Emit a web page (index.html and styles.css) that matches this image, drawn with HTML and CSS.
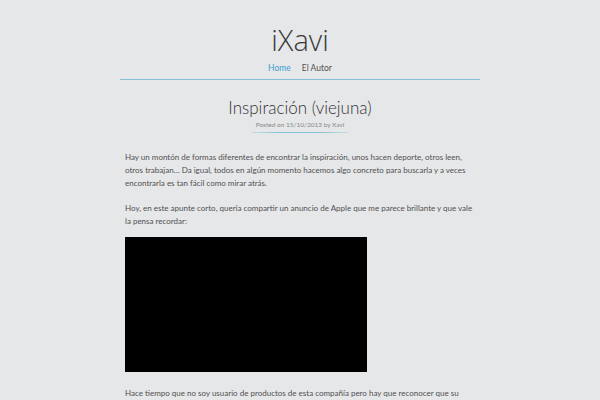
FILE: index.html
```html
<!DOCTYPE html>
<html lang="es">
<head>
<meta charset="utf-8">
<title>iXavi</title>
<link rel="stylesheet" href="styles.css">
</head>
<body>
<header class="site-header">
  <h1 class="site-title">iXavi</h1>
  <nav class="main-nav">
    <a class="nav-link current" href="#">Home</a>
    <a class="nav-link" href="#">El Autor</a>
  </nav>
</header>
<main class="content">
  <article class="post">
    <header class="post-header">
      <h2 class="post-title">Inspiración (viejuna)</h2>
      <div class="post-meta">Posted on 15/10/2013 by Xavi</div>
      <div class="post-rule"></div>
    </header>
    <div class="post-body">
      <p>Hay un montón de formas diferentes de encontrar la inspiración, unos hacen deporte, otros leen, otros trabajan… Da igual, todos en algún momento hacemos algo concreto para buscarla y a veces encontrarla es tan fácil como mirar atrás.</p>
      <p>Hoy, en este apunte corto, quería compartir un anuncio de Apple que me parece brillante y que vale la pensa recordar:</p>
      <div class="video"></div>
      <p>Hace tiempo que no soy usuario de productos de esta compañía pero hay que reconocer que su capacidad para comunicar sigue siendo única.</p>
    </div>
  </article>
</main>
</body>
</html>
```

FILE: styles.css
```css
html, body {
  margin: 0;
  padding: 0;
}
body {
  background: #e6e7e9;
  font-family: Lato, "Open Sans", sans-serif;
  color: #505050;
}
.site-header {
  width: 360px;
  margin: 0 auto;
  padding-top: 20px;
  text-align: center;
  border-bottom: 1px solid #84c1d4;
}
.site-title {
  margin: 0;
  font-family: "Open Sans", sans-serif;
  font-size: 29px;
  line-height: 40px;
  font-weight: 300;
  color: #3a3a3a;
}
.main-nav {
  display: flex;
  justify-content: center;
  gap: 11px;
  padding: 2px 0 5px;
  font-size: 8.5px;
  line-height: 12px;
}
.nav-link {
  color: #505050;
  text-decoration: none;
}
.nav-link.current {
  color: #3a9fcc;
}
.content {
  width: 360px;
  margin: 0 auto;
}
.post-header {
  display: flex;
  flex-direction: column;
  align-items: center;
  padding-top: 15px;
}
.post-title {
  margin: 0;
  font-size: 17px;
  line-height: 25px;
  font-weight: 300;
  color: #333;
}
.post-meta {
  font-size: 6.5px;
  line-height: 9px;
  color: #888;
}
.post-rule {
  width: 96px;
  height: 1px;
  margin-top: 3px;
  background: linear-gradient(to right, rgba(132,193,212,0.3), #84c1d4 30%, #84c1d4 70%, rgba(132,193,212,0.3));
}
.post-body {
  padding: 18px 5px 0;
  font-size: 8px;
  line-height: 13px;
}
.post-body p {
  margin: 0 0 12px;
}
.video {
  width: 242px;
  height: 135px;
  background: #000;
  margin: -3px 0 15px;
}
```
